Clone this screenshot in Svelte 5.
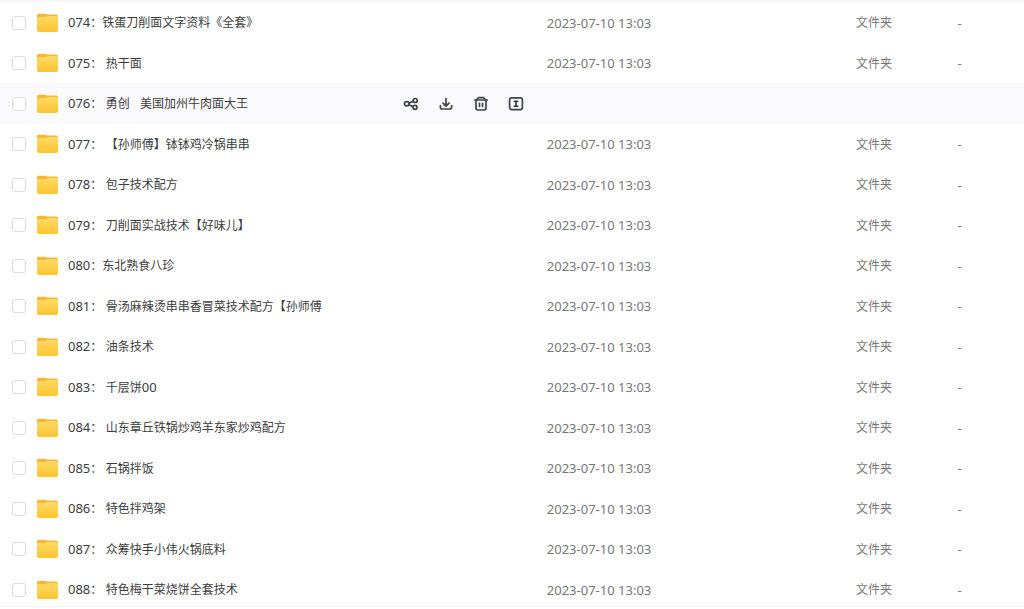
<script>
    const modified = "2023-07-10 13:03";
    const activeRow = 2;

    let files = [
        "074：铁蛋刀削面文字资料《全套》",
        "075： 热干面",
        "076： 勇创   美国加州牛肉面大王",
        "077： 【孙师傅】钵钵鸡冷锅串串",
        "078： 包子技术配方",
        "079： 刀削面实战技术【好味儿】",
        "080：东北熟食八珍",
        "081： 骨汤麻辣烫串串香冒菜技术配方【孙师傅",
        "082： 油条技术",
        "083： 千层饼00",
        "084： 山东章丘铁锅炒鸡羊东家炒鸡配方",
        "085： 石锅拌饭",
        "086： 特色拌鸡架",
        "087： 众筹快手小伟火锅底料",
        "088： 特色梅干菜烧饼全套技术",
    ].map((name) => ({ name, checked: false }));

    // digits are set a little larger than the Chinese text
    function splitName(name) {
        return name.match(/[ -~]+|[^ -~]+/g).map((text) => ({
            text,
            chinese: !/^[ -~]/.test(text),
        }));
    }
</script>

<svelte:head>
    <title>文件</title>
</svelte:head>

<svg class="defs" width="0" height="0" aria-hidden="true">
    <defs>
        <linearGradient id="folderFront" x1="0" y1="0" x2="0" y2="1">
            <stop offset="0" stop-color="#ffda66" />
            <stop offset="1" stop-color="#fdc430" />
        </linearGradient>
    </defs>
</svg>

<div class="list">
    <table>
        <colgroup>
            <col class="nameCol" />
            <col class="dateCol" />
            <col class="typeCol" />
            <col />
        </colgroup>
        <tbody>
            {#each files as file, i}
                <tr class:active={i === activeRow}>
                    <td>
                        <div class="nameCell">
                            <input
                                type="checkbox"
                                aria-label={file.name}
                                bind:checked={file.checked}
                            />
                            <svg class="folder" viewBox="0 0 21 20" aria-hidden="true">
                                <path
                                    d="M0 2.500Q0 .7 1.800 .7H7.800Q8.800 .7 9.400 1.200L9.900 1.600H19.200Q21 1.600 21 3.400V10H0Z"
                                    fill="#f7b733"
                                />
                                <path
                                    d="M0 5.400Q0 4 1.400 4H8.400Q9.400 4 10 3.600L10.600 3.200Q11.200 2.900 12 2.900H19.400Q21 2.900 21 4.500V17.200Q21 19 19.200 19H1.800Q0 19 0 17.200Z"
                                    fill="url(#folderFront)"
                                />
                            </svg>
                            <a href="#{i}" class="name"
                                >{#each splitName(file.name) as part}<span class:chinese={part.chinese}>{part.text}</span>{/each}</a
                            >
                            {#if i === activeRow}
                                <div class="actions">
                                    <button type="button" aria-label="分享">
                                        <svg viewBox="0 0 16 16">
                                            <circle cx="3.700" cy="7.800" r="2.200" />
                                            <circle cx="12.200" cy="4.500" r="2" />
                                            <circle cx="12" cy="11.300" r="2" />
                                            <path d="M5.900 7.100L10.200 5.300M5.800 8.700L10.100 10.600" />
                                        </svg>
                                    </button>
                                    <button type="button" aria-label="下载">
                                        <svg viewBox="0 0 16 16">
                                            <path d="M8 2.500V9.800M5 7.100L8 10.100L11 7.100" />
                                            <path d="M2.400 9.500V11.200Q2.400 13 4.200 13H11.800Q13.600 13 13.600 11.200V9.500" />
                                        </svg>
                                    </button>
                                    <button type="button" aria-label="删除">
                                        <svg viewBox="0 0 16 16">
                                            <path d="M1.800 4H14.200M3.500 4L5.300 1.700H10.700L12.500 4" />
                                            <path d="M3 4.500V12.100Q3 14 4.900 14H11.100Q13 14 13 12.100V4.500" />
                                            <path d="M6.500 7.300V10.500M9.500 7.300V10.500" />
                                        </svg>
                                    </button>
                                    <button type="button" aria-label="重命名">
                                        <svg viewBox="0 0 16 16">
                                            <rect x="1.600" y="1.900" width="12.800" height="11.700" rx="2" />
                                            <path d="M6.300 5.300H9.700M8 5.300V10.200M6.300 10.200H9.700" />
                                        </svg>
                                    </button>
                                </div>
                            {/if}
                        </div>
                    </td>
                    {#if i === activeRow}
                        <td></td>
                        <td></td>
                        <td></td>
                    {:else}
                        <td>{modified}</td>
                        <td><span class="chinese">文件夹</span></td>
                        <td>-</td>
                    {/if}
                </tr>
            {/each}
        </tbody>
    </table>
</div>

<style>
    :global(body) {
        background: #fff;
    }
    .defs {
        position: absolute;
    }
    .list {
        box-sizing: border-box;
        height: calc(100vh - 2px);
        overflow: hidden;
        border-top: 2px solid #f8f8fa;
        border-bottom: 1px solid #f3f3f5;
        font-family: "Noto Sans", "Noto Sans CJK SC", sans-serif;
        font-size: 13px;
        line-height: 18px;
        color: #777;
    }
    table {
        width: 100%;
        table-layout: fixed;
        border-collapse: collapse;
    }
    .nameCol {
        width: 53.4%;
    }
    .dateCol {
        width: 30.2%;
    }
    .typeCol {
        width: 9.9%;
    }
    tr {
        height: 40px;
    }
    tr:nth-child(odd) {
        height: 41px;
    }
    .active {
        background: #fafafc;
    }
    td {
        padding: 0;
        white-space: nowrap;
    }
    .chinese {
        font-size: 12px;
    }
    .nameCell {
        display: flex;
        align-items: center;
        padding: 0 23px 0 12px;
    }
    input {
        appearance: none;
        flex: none;
        box-sizing: border-box;
        width: 14px;
        height: 14px;
        margin: 0;
        border: 1px solid #dcdcde;
        border-radius: 3px;
        background: #fff;
    }
    input:checked {
        background: #06a7ff;
    }
    .folder {
        flex: none;
        width: 21px;
        height: 20px;
        margin: 0 10px 0 11px;
    }
    .name {
        color: #3c3c3c;
        text-decoration: none;
        white-space: pre;
    }
    .actions {
        display: flex;
        gap: 19px;
        margin-left: auto;
    }
    button {
        width: 16px;
        height: 16px;
        padding: 0;
        border: none;
        background: none;
        cursor: pointer;
    }
    button svg {
        display: block;
        width: 16px;
        height: 16px;
        fill: none;
        stroke: #3f4350;
        stroke-width: 1.7;
        stroke-linecap: round;
        stroke-linejoin: round;
    }
</style>
